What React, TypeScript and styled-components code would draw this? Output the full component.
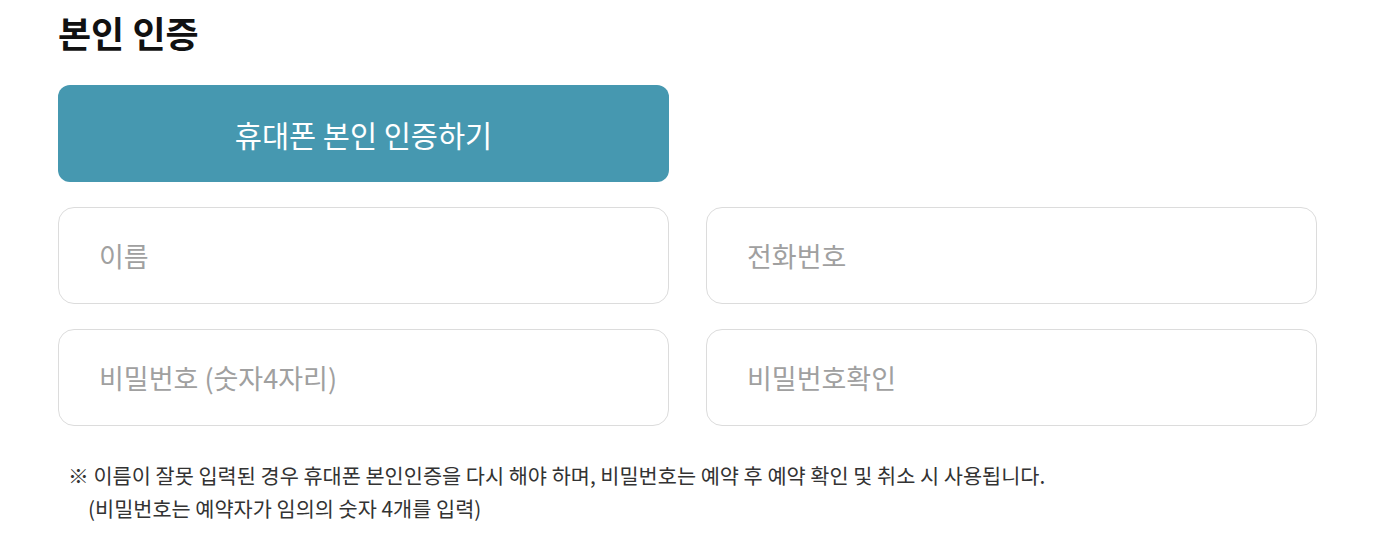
import styled, { createGlobalStyle } from "styled-components";

const GlobalStyle = createGlobalStyle`
  body {
    margin: 0;
    background: #ffffff;
    font-family: "Noto Sans CJK KR", "Noto Sans", sans-serif;
  }
  * { box-sizing: border-box; }
`;

const Section = styled.section`
  padding: 10px 0 0 58px;
  width: 1317px;
`;

const Title = styled.h2`
  margin: 0 0 30px;
  font-size: 36px;
  line-height: 45px;
  font-weight: 700;
  color: #111111;
`;

const FormGrid = styled.div`
  display: grid;
  grid-template-columns: 611px 611px;
  column-gap: 37px;
  row-gap: 25px;
`;

const VerifyButton = styled.button`
  grid-column: 1;
  height: 97px;
  border: none;
  border-radius: 12px;
  background: #4698b0;
  color: #ffffff;
  font-family: inherit;
  font-size: 29.5px;
  font-weight: 400;
  cursor: pointer;
`;

const Spacer = styled.div``;

const Field = styled.input`
  height: 97px;
  padding: 0 40px;
  border: 1px solid #dcdcdc;
  border-radius: 16px;
  background: #ffffff;
  font-family: inherit;
  font-size: 27px;
  color: #333333;
  outline: none;

  &::placeholder {
    color: #a0a0a0;
  }
`;

const Notice = styled.div`
  margin-top: 33px;
  padding-left: 10px;
  font-size: 20.8px;
  line-height: 33px;
  color: #333333;
`;

const NoticeLine = styled.p<{ $indent?: boolean }>`
  margin: 0;
  padding-left: ${(p) => (p.$indent ? "20px" : "0")};
`;

export default function App() {
  return (
    <>
      <GlobalStyle />
      <Section>
        <Title>본인 인증</Title>
        <FormGrid>
          <VerifyButton type="button">휴대폰 본인 인증하기</VerifyButton>
          <Spacer />
          <Field type="text" placeholder="이름" />
          <Field type="tel" placeholder="전화번호" />
          <Field type="password" placeholder="비밀번호 (숫자4자리)" />
          <Field type="password" placeholder="비밀번호확인" />
        </FormGrid>
        <Notice>
          <NoticeLine>
            ※ 이름이 잘못 입력된 경우 휴대폰 본인인증을 다시 해야 하며, 비밀번호는 예약 후 예약 확인 및 취소 시 사용됩니다.
          </NoticeLine>
          <NoticeLine $indent>(비밀번호는 예약자가 임의의 숫자 4개를 입력)</NoticeLine>
        </Notice>
      </Section>
    </>
  );
}
